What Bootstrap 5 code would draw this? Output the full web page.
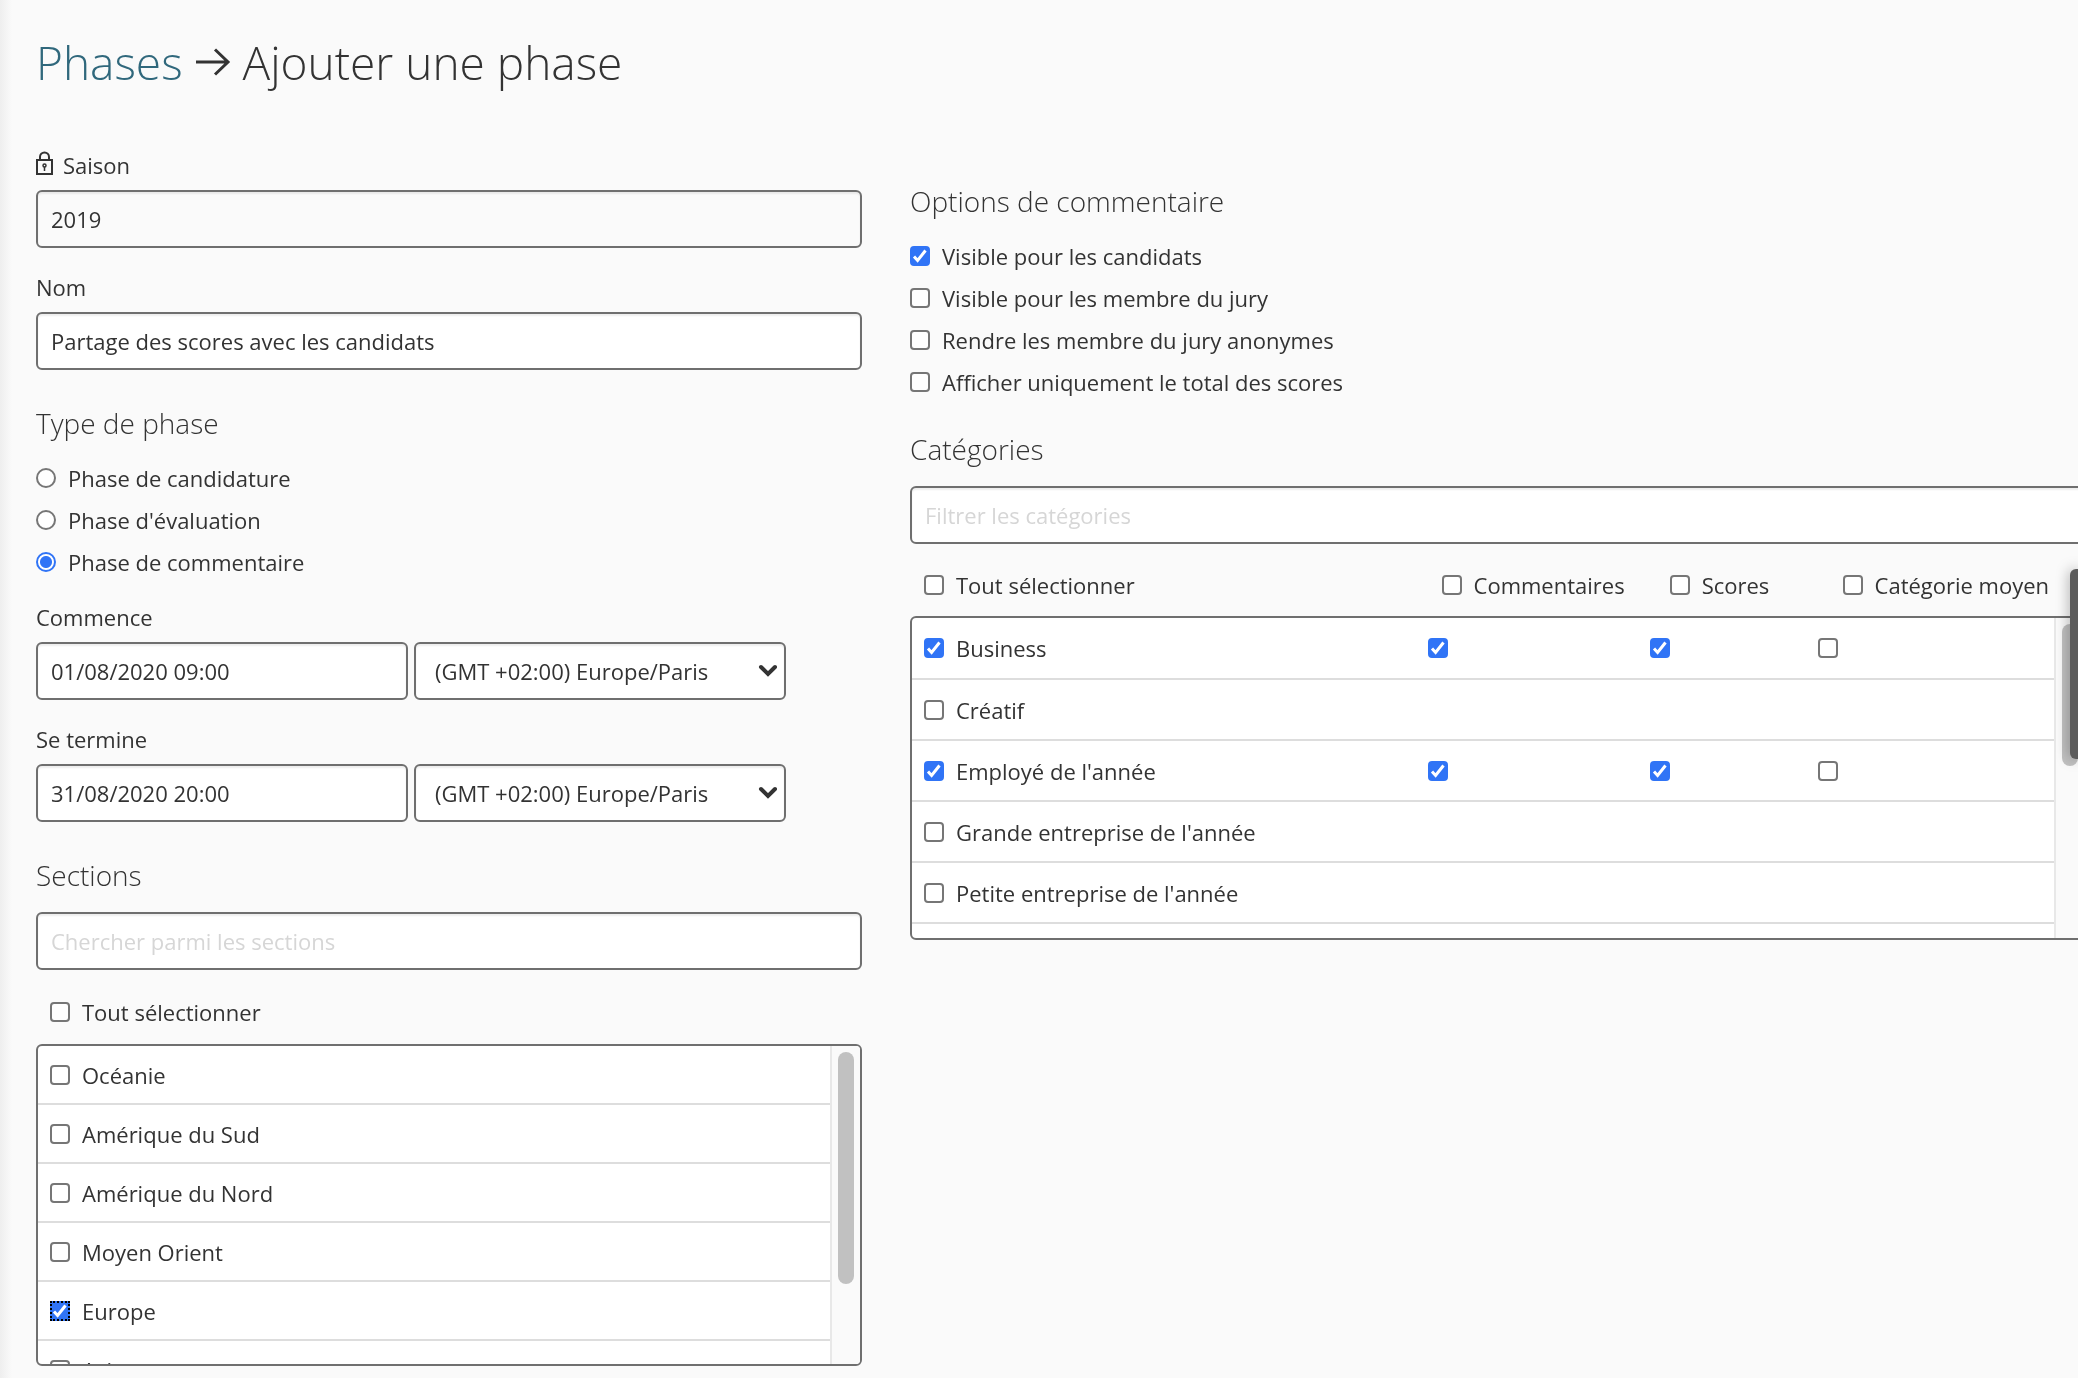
<!DOCTYPE html>
<html lang="fr">
<head>
<meta charset="utf-8">
<meta name="viewport" content="width=device-width, initial-scale=1">
<title>Ajouter une phase</title>
<link rel="stylesheet" href="https://cdn.jsdelivr.net/npm/bootstrap@5.3.0/dist/css/bootstrap.min.css">
<style>
body{font-family:"Open Sans","Noto Sans",sans-serif;font-size:22px;line-height:30px;color:#333;background:#fafafa;overflow-x:hidden}
.page-shell{padding:29px 0 0 36px;margin-right:-8px}
.edge-shade{position:fixed;left:0;top:0;bottom:0;width:12px;background:linear-gradient(90deg,#eee,#fafafa);z-index:-1}
.page-title{font-size:46px;line-height:66px;font-weight:300;gap:12px;margin-bottom:55px}
.page-title a{color:#30687c;text-decoration:none}
.form-cols{display:grid;grid-template-columns:413fr 588fr;gap:48px;align-items:start}
.form-cols>div{min-width:0}
.right-col{padding-top:32px}
.field-label{display:block;margin-bottom:10px;line-height:30px}
.sub-title{font-size:28px;line-height:38px;font-weight:300;margin:0 0 15px}
.sub-title.above-box{margin-bottom:18px}
.form-control,.form-select{height:58px;border:2px solid #6f6f6f;border-radius:6px;font-size:22px;line-height:30px;color:#333;padding:0 13px;box-shadow:inset 0 2px 2px rgba(0,0,0,.07)}
.form-control[readonly]{background:#fafafa}
.form-control::placeholder{color:#d6d6d6}
.form-select{padding:0 40px 0 19px;background:#fff url("data:image/svg+xml,%3Csvg xmlns='http://www.w3.org/2000/svg' width='20' height='14'%3E%3Cpath d='M3 3l7 7 7-7' fill='none' stroke='%23333' stroke-width='4' stroke-linecap='round'/%3E%3C/svg%3E") no-repeat right 6px center/20px 14px}
.slot{flex:0 1 372px;min-width:0}
.slot-row{gap:6px}
.field-gap{margin-bottom:24px}
.section-gap{margin-bottom:34px}
.type-list{margin-bottom:19px}
.option-list{margin-bottom:27px}
.choice{display:flex;align-items:center;gap:12px;min-height:42px}
.choice.tight{min-height:30px}
.form-check-input{width:20px;height:20px;margin:0;flex:none;border:2px solid #767676;background-color:#fff}
.form-check-input[type=checkbox]{border-radius:4px}
.form-check-input:checked{border-color:#3074f6}
.form-check-input:checked[type=checkbox]{background:#3074f6 url("data:image/svg+xml,%3Csvg xmlns='http://www.w3.org/2000/svg' viewBox='0 0 20 20'%3E%3Cpath d='M4 10.500l3.600 4L15.500 4.500' fill='none' stroke='%23fff' stroke-width='3'/%3E%3C/svg%3E") center/20px 20px no-repeat}
.form-check-input:checked[type=radio]{background:radial-gradient(circle,#3074f6 0 5.500px,#fff 6.500px)}
.form-check-input.has-focus{border-radius:0!important;outline:2px dotted #000;outline-offset:-2px}
.pick-head{padding:27px 12px 17px 9px}
.pick-head,.pick-row{padding-left:12px}
.pick-head{padding-left:14px}
.scroll-box{border:2px solid #6f6f6f;border-radius:6px;background:#fff;overflow:hidden;display:flex;height:322px}
.scroll-box.tall{height:324px}
.scroll-body{flex:1;min-width:0;overflow:hidden}
.pick-row{height:59px;border-bottom:2px solid #ddd;display:flex;align-items:center}
.scroll-track{width:30px;flex:none;background:#fafafa;border-left:2px solid #e8e8e8;padding:6px}
.scroll-thumb{width:16px;height:232px;border-radius:8px;background:#c1c1c1}
.tall .scroll-thumb{height:142px}
.pick-table{width:100%;table-layout:fixed;border-collapse:collapse}
.pick-table th{font-weight:400}
.pick-table td,.pick-table th{padding:0;white-space:nowrap}
.scroll-body tr{height:61px;border-bottom:2px solid #ddd}
.scroll-body td:first-child{padding-left:12px}
.scroll-body td>.form-check-input{display:block}
.head-table{margin:26px 0 16px}
.head-table th:first-child{padding-left:14px}
.col-name{width:45.2%}
.col-comment{width:19.4%}
.col-score{width:14.7%}
.side-tab{position:fixed;right:0;top:569px;width:8px;height:190px;padding:0;border:0;border-radius:6px 0 0 6px;background:#5c5c5c;box-shadow:0 0 14px rgba(0,0,0,.4)}
</style>
<script src="https://cdn.jsdelivr.net/npm/bootstrap@5.3.0/dist/js/bootstrap.bundle.min.js"></script>
</head>
<body>
<div class="edge-shade"></div>
<main class="page-shell">
<h1 class="page-title d-flex align-items-center"><a href="#">Phases</a><svg width="36" height="30" viewBox="0 0 36 30" fill="none" stroke="#333" stroke-width="3" aria-hidden="true"><path d="M1 15H33M20 2.500L33 15L20 27.500"/></svg><span>Ajouter une phase</span></h1>
<form class="form-cols">
<div>
  <div class="field-gap">
    <label class="field-label" for="saison"><span class="d-flex align-items-center"><svg class="me-2 mb-1" width="19" height="24" viewBox="0 0 19 24" fill="none" stroke="#333" stroke-width="2" aria-hidden="true"><path d="M1 9H16V23H1ZM4 9V6a4.500 4.500 0 0 1 9 0V9"/><circle cx="8.500" cy="14.500" r="1.500" stroke-width="1.500"/><path d="M8.500 16v4" stroke-width="1.500"/></svg>Saison</span></label>
    <input class="form-control" id="saison" value="2019" readonly>
  </div>
  <div class="section-gap">
    <label class="field-label" for="nom">Nom</label>
    <input class="form-control" id="nom" value="Partage des scores avec les candidats">
  </div>
  <h2 class="sub-title">Type de phase</h2>
  <div class="type-list">
    <label class="choice"><input class="form-check-input" type="radio" name="type">Phase de candidature</label>
    <label class="choice"><input class="form-check-input" type="radio" name="type">Phase d'évaluation</label>
    <label class="choice"><input class="form-check-input" type="radio" name="type" checked>Phase de commentaire</label>
  </div>
  <div class="field-gap">
    <label class="field-label" for="debut">Commence</label>
    <div class="d-flex slot-row">
      <div class="slot"><input class="form-control" id="debut" value="01/08/2020 09:00"></div>
      <div class="slot"><select class="form-select" aria-label="Fuseau horaire"><option>(GMT +02:00) Europe/Paris</option></select></div>
    </div>
  </div>
  <div class="section-gap">
    <label class="field-label" for="fin">Se termine</label>
    <div class="d-flex slot-row">
      <div class="slot"><input class="form-control" id="fin" value="31/08/2020 20:00"></div>
      <div class="slot"><select class="form-select" aria-label="Fuseau horaire"><option>(GMT +02:00) Europe/Paris</option></select></div>
    </div>
  </div>
  <h2 class="sub-title above-box">Sections</h2>
  <input class="form-control" placeholder="Chercher parmi les sections" aria-label="Chercher parmi les sections">
  <div class="pick-head"><label class="choice tight"><input class="form-check-input" type="checkbox">Tout sélectionner</label></div>
  <div class="scroll-box">
    <div class="scroll-body">
      <div class="pick-row"><label class="choice"><input class="form-check-input" type="checkbox">Océanie</label></div>
      <div class="pick-row"><label class="choice"><input class="form-check-input" type="checkbox">Amérique du Sud</label></div>
      <div class="pick-row"><label class="choice"><input class="form-check-input" type="checkbox">Amérique du Nord</label></div>
      <div class="pick-row"><label class="choice"><input class="form-check-input" type="checkbox">Moyen Orient</label></div>
      <div class="pick-row"><label class="choice"><input class="form-check-input has-focus" type="checkbox" checked>Europe</label></div>
      <div class="pick-row"><label class="choice"><input class="form-check-input" type="checkbox">Asie</label></div>
    </div>
    <div class="scroll-track"><div class="scroll-thumb"></div></div>
  </div>
</div>
<div class="right-col">
  <h2 class="sub-title">Options de commentaire</h2>
  <div class="option-list">
    <label class="choice"><input class="form-check-input" type="checkbox" checked>Visible pour les candidats</label>
    <label class="choice"><input class="form-check-input" type="checkbox">Visible pour les membre du jury</label>
    <label class="choice"><input class="form-check-input" type="checkbox">Rendre les membre du jury anonymes</label>
    <label class="choice"><input class="form-check-input" type="checkbox">Afficher uniquement le total des scores</label>
  </div>
  <h2 class="sub-title above-box">Catégories</h2>
  <input class="form-control" placeholder="Filtrer les catégories" aria-label="Filtrer les catégories">
  <table class="pick-table head-table">
    <colgroup><col class="col-name"><col class="col-comment"><col class="col-score"><col></colgroup>
    <tr>
      <th><label class="choice tight"><input class="form-check-input" type="checkbox">Tout sélectionner</label></th>
      <th><label class="choice tight"><input class="form-check-input" type="checkbox">Commentaires</label></th>
      <th><label class="choice tight"><input class="form-check-input" type="checkbox">Scores</label></th>
      <th><label class="choice tight"><input class="form-check-input" type="checkbox">Catégorie moyen</label></th>
    </tr>
  </table>
  <div class="scroll-box tall">
    <div class="scroll-body">
      <table class="pick-table">
        <colgroup><col class="col-name"><col class="col-comment"><col class="col-score"><col></colgroup>
        <tr><td><label class="choice"><input class="form-check-input" type="checkbox" checked>Business</label></td><td><input class="form-check-input" type="checkbox" aria-label="Commentaires" checked></td><td><input class="form-check-input" type="checkbox" aria-label="Scores" checked></td><td><input class="form-check-input" type="checkbox" aria-label="Catégorie moyen"></td></tr>
        <tr><td colspan="4"><label class="choice"><input class="form-check-input" type="checkbox">Créatif</label></td></tr>
        <tr><td><label class="choice"><input class="form-check-input" type="checkbox" checked>Employé de l'année</label></td><td><input class="form-check-input" type="checkbox" aria-label="Commentaires" checked></td><td><input class="form-check-input" type="checkbox" aria-label="Scores" checked></td><td><input class="form-check-input" type="checkbox" aria-label="Catégorie moyen"></td></tr>
        <tr><td colspan="4"><label class="choice"><input class="form-check-input" type="checkbox">Grande entreprise de l'année</label></td></tr>
        <tr><td colspan="4"><label class="choice"><input class="form-check-input" type="checkbox">Petite entreprise de l'année</label></td></tr>
      </table>
    </div>
    <div class="scroll-track"><div class="scroll-thumb"></div></div>
  </div>
</div>
</form>
</main>
<button class="side-tab" type="button" aria-label="Ouvrir le panneau"></button>
</body>
</html>
